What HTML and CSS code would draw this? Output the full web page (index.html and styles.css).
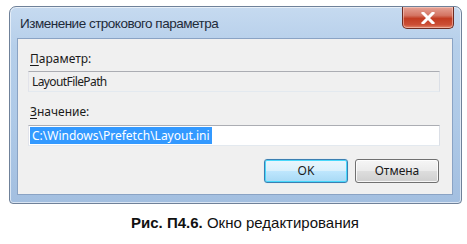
FILE: index.html
```html
<!DOCTYPE html>
<html lang="ru">
<head>
<meta charset="utf-8">
<link rel="stylesheet" href="styles.css">
</head>
<body>
<div class="window">
  <div class="titlebar">
    <span class="title">Изменение строкового параметра</span>
    <div class="close">
      <svg width="14" height="12" viewBox="0 0 14 12"><path d="M2 1 L12 11 M12 1 L2 11" stroke="#ffffff" stroke-width="3" stroke-linecap="square"/></svg>
    </div>
  </div>
  <div class="panel">
    <div class="label"><u>П</u>араметр:</div>
    <div class="field readonly">LayoutFilePath</div>
    <div class="label second"><u>З</u>начение:</div>
    <div class="field edit"><span class="sel">C:\Windows\Prefetch\Layout.ini</span></div>
    <div class="buttons">
      <div class="btn default">OK</div>
      <div class="btn">Отмена</div>
    </div>
  </div>
</div>
<div class="caption"><b>Рис. П4.6.</b> Окно редактирования</div>
</body>
</html>
```
FILE: styles.css
```css
html, body {
  margin: 0;
  padding: 0;
  background: #ffffff;
}
body {
  width: 467px;
  height: 244px;
  overflow: hidden;
  font-family: "Noto Sans", "DejaVu Sans", sans-serif;
}
.window {
  margin: 6px 0 0 9px;
  width: 453px;
  height: 198px;
  box-sizing: border-box;
  border: 1px solid #6f8199;
  border-radius: 7px 7px 4px 4px;
  padding: 0 8px 8px 7px;
  background: linear-gradient(180deg, #c6daf0 0%, #b6cfea 20%, #aec9e7 60%, #a3bfe0 100%);
  box-shadow: inset 0 0 0 1px rgba(255,255,255,0.6);
  display: flex;
  flex-direction: column;
}
.titlebar {
  height: 31px;
  flex: none;
  display: flex;
  justify-content: space-between;
  align-items: flex-start;
}
.title {
  margin-top: 9px;
  padding-left: 3px;
  font-family: "Liberation Sans", Arial, sans-serif;
  font-size: 13.5px;
  letter-spacing: -0.5px;
  color: #1e2b3a;
}
.close {
  width: 52px;
  height: 22px;
  box-sizing: border-box;
  margin-right: -1px;
  border: 1px solid #6e2c22;
  border-top: none;
  border-radius: 0 0 5px 5px;
  background: linear-gradient(180deg, #e6a396 0%, #d47563 40%, #c23c22 55%, #cc4f36 85%, #e38a6e 100%);
  box-shadow: inset 0 0 0 1px rgba(255,220,210,0.5);
  display: flex;
  align-items: center;
  justify-content: center;
}
.panel {
  flex: 1;
  background: #f0f0f0;
  border: 1px solid #8aa3c4;
  padding: 12px 12px 0 10px;
  display: flex;
  flex-direction: column;
}
.label {
  font-size: 12px;
  line-height: 15px;
  color: #1a1a1a;
  padding-left: 2px;
  height: 15px;
}
.label u {
  text-decoration-thickness: 1px;
  text-underline-offset: 2px;
}
.label.second {
  margin-top: 12px;
}
.field {
  margin-top: 5px;
  height: 21px;
  box-sizing: border-box;
  border: 1px solid #abadb3;
  border-left-color: #e2e3ea;
  border-right-color: #dbdfe6;
  border-bottom-color: #e3e9ef;
  font-size: 12px;
  line-height: 19px;
  padding-left: 3px;
  color: #202020;
}
.field.readonly {
  background: #f0f0f0;
  letter-spacing: -0.6px;
}
.field.edit {
  background: #ffffff;
  padding-left: 1px;
  margin-top: 6px;
}
.sel {
  display: inline-block;
  background: #3399ff;
  color: #ffffff;
  padding: 0 2px;
  line-height: 17px;
  margin-top: 1px;
  vertical-align: top;
}
.buttons {
  margin-top: 13px;
  display: flex;
  justify-content: flex-end;
  gap: 7px;
  padding-right: 1px;
}
.btn {
  width: 84px;
  height: 24px;
  box-sizing: border-box;
  border: 1px solid #707070;
  border-radius: 3px;
  background: linear-gradient(180deg, #f6f6f6 0%, #ebebeb 48%, #dddddd 52%, #cfcfcf 100%);
  box-shadow: inset 0 0 0 1px rgba(255,255,255,0.8);
  font-size: 12px;
  line-height: 22px;
  text-align: center;
  color: #1a1a1a;
}
.btn.default {
  border-color: #3c7fb1;
  background: linear-gradient(180deg, #eaf6fd 0%, #d9f0fc 48%, #bee6fd 52%, #a7d9f5 100%);
  box-shadow: inset 0 0 0 1px #48d8fb, 0 0 1px #9ad6f5;
}
.caption {
  margin-top: 10px;
  padding-left: 23px;
  text-align: center;
  font-family: "Liberation Sans", Arial, sans-serif;
  font-size: 15px;
  line-height: 17px;
  color: #111111;
}
.caption b {
  font-weight: bold;
}
```
